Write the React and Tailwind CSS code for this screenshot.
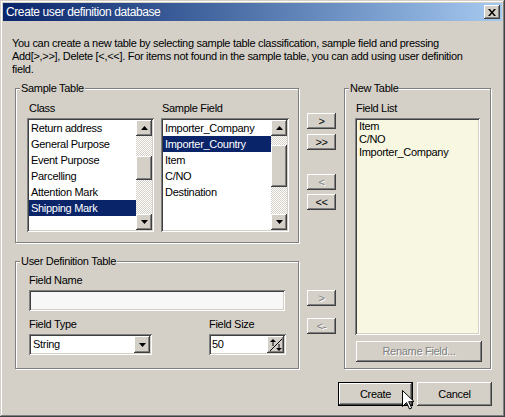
import React from "react";

// Win2000 style bevels
const raised =
  "shadow-[inset_-1px_-1px_0_#404040,inset_1px_1px_0_#ffffff,inset_-2px_-2px_0_#808080,inset_2px_2px_0_#d4d0c8]";
const sunken =
  "shadow-[inset_1px_1px_0_#808080,inset_-1px_-1px_0_#ffffff,inset_2px_2px_0_#404040,inset_-2px_-2px_0_#d4d0c8]";
const disabledText = "text-[#808080] [text-shadow:1px_1px_0_#ffffff]";

function Group({ label, className, children }) {
  return (
    <div
      className={`relative border border-[#808080] shadow-[inset_1px_1px_0_#ffffff,1px_1px_0_#ffffff] ${className}`}
    >
      <span className="absolute left-[4px] top-[-7px] px-[1px] bg-[#d4d0c8] leading-[13px]">
        {label}
      </span>
      {children}
    </div>
  );
}

function Arrow({ up }) {
  return (
    <svg width="7" height="4" viewBox="0 0 7 4">
      {up ? (
        <polygon points="3.5,0 7,4 0,4" fill="#000" />
      ) : (
        <polygon points="0,0 7,0 3.5,4" fill="#000" />
      )}
    </svg>
  );
}

function Scrollbar({ thumbTop, thumbHeight }) {
  return (
    <div className="w-[16px] flex flex-col">
      <div className={`h-[16px] bg-[#d4d0c8] flex items-center justify-center ${raised}`}>
        <Arrow up />
      </div>
      <div className="flex-1 flex flex-col bg-[repeating-conic-gradient(#d4d0c8_0%_25%,#ffffff_0%_50%)] bg-[length:2px_2px]">
        <div style={{ height: thumbTop }} />
        <div className={`bg-[#d4d0c8] ${raised}`} style={{ height: thumbHeight }} />
      </div>
      <div className={`h-[16px] bg-[#d4d0c8] flex items-center justify-center ${raised}`}>
        <Arrow />
      </div>
    </div>
  );
}

function ListBox({ items, selected, thumbTop, thumbHeight, width }) {
  return (
    <div className={`mt-[3px] h-[114px] bg-white p-[2px] flex ${sunken}`} style={{ width }}>
      <div className="flex-1">
        {items.map((item, i) => (
          <div
            key={i}
            className={`h-[16px] leading-[16px] pl-[2px] whitespace-nowrap ${
              i === selected ? "bg-[#0a246a] text-white" : ""
            }`}
          >
            {item}
          </div>
        ))}
      </div>
      <Scrollbar thumbTop={thumbTop} thumbHeight={thumbHeight} />
    </div>
  );
}

function SmallButton({ label, disabled, className }) {
  return (
    <div
      className={`h-[16px] w-[29px] bg-[#d4d0c8] flex items-center justify-center leading-none ${raised} ${
        disabled ? disabledText : ""
      } ${className}`}
    >
      {label}
    </div>
  );
}

function SpinGlyph() {
  return (
    <svg width="12" height="12" viewBox="0 0 12 12">
      <line x1="0" y1="12" x2="12" y2="0" stroke="#000" strokeWidth="1" />
      <polygon points="3,0 6,3 0,3" fill="#000" />
      <rect x="2.5" y="3" width="1" height="4" fill="#000" />
      <polygon points="9,12 12,9 6,9" fill="#000" />
      <rect x="8.5" y="5" width="1" height="4" fill="#000" />
    </svg>
  );
}

export default function App() {
  return (
    <div className="relative w-[505px] h-[417px] overflow-hidden bg-[#d4d0c8] p-[3px] flex flex-col text-black text-[11px] tracking-[-0.3px] font-['Liberation_Sans',Arial,sans-serif] shadow-[inset_-1px_-1px_0_#404040,inset_1px_1px_0_#d4d0c8,inset_-2px_-2px_0_#808080,inset_2px_2px_0_#ffffff]">
      {/* title bar */}
      <div className="h-[18px] flex items-center pl-[3px] pr-[2px] bg-linear-to-r from-[#0a246a] to-[#a6caf0]">
        <span className="text-white text-[12px] tracking-[-0.4px] leading-none">
          Create user definition database
        </span>
        <div className={`ml-auto w-[16px] h-[14px] bg-[#d4d0c8] flex items-center justify-center ${raised}`}>
          <svg width="8" height="7" viewBox="0 0 8 7">
            <path d="M0 0h2l2 2.5L6 0h2L5 3.5 8 7H6L4 4.5 2 7H0l3-3.5z" fill="#000" />
          </svg>
        </div>
      </div>

      <div className="flex-1 px-[9px]">
        <p className="mt-[16px] leading-[13px] whitespace-nowrap">
          You can create a new table by selecting sample table classification, sample field and pressing
          <br />
          Add[&gt;,&gt;&gt;], Delete [&lt;,&lt;&lt;]. For items not found in the sample table, you can add using user definition
          <br />
          field.
        </p>

        <div className="mt-[12px] ml-[3px] flex">
          {/* left column */}
          <div className="flex flex-col">
            <Group label="Sample Table" className="w-[284px] h-[155px] pt-[13px] pl-[11px]">
              <div className="flex gap-[7px]">
                <div>
                  <div className="ml-[2px] leading-[13px]">Class</div>
                  <ListBox
                    width={127}
                    items={[
                      "Return address",
                      "General Purpose",
                      "Event Purpose",
                      "Parcelling",
                      "Attention Mark",
                      "Shipping Mark",
                    ]}
                    selected={5}
                    thumbTop={20}
                    thumbHeight={24}
                  />
                </div>
                <div>
                  <div className="ml-[1px] leading-[13px]">Sample Field</div>
                  <ListBox
                    width={128}
                    items={["Importer_Company", "Importer_Country", "Item", "C/NO", "Destination"]}
                    selected={1}
                    thumbTop={9}
                    thumbHeight={42}
                  />
                </div>
              </div>
            </Group>

            <Group label="User Definition Table" className="mt-[18px] w-[284px] h-[108px] pt-[12px] pl-[13px]">
              <div className="leading-[13px]">Field Name</div>
              <div className={`mt-[3px] w-[256px] h-[21px] bg-[#f7f7f7] ${sunken}`} />
              <div className="mt-[7px] flex">
                <div className="w-[123px]">
                  <div className="leading-[13px]">Field Type</div>
                  <div className={`mt-[3px] h-[21px] bg-white p-[2px] flex items-center ${sunken}`}>
                    <span className="flex-1 pl-[2px]">String</span>
                    <div className={`w-[16px] h-[17px] bg-[#d4d0c8] flex items-center justify-center ${raised}`}>
                      <Arrow />
                    </div>
                  </div>
                </div>
                <div className="ml-[57px] w-[77px]">
                  <div className="leading-[13px]">Field Size</div>
                  <div className={`mt-[3px] h-[21px] bg-white p-[2px] flex items-center ${sunken}`}>
                    <span className="flex-1 pl-[1px]">50</span>
                    <div className={`w-[17px] h-[17px] bg-[#d4d0c8] flex items-center justify-center ${raised}`}>
                      <SpinGlyph />
                    </div>
                  </div>
                </div>
              </div>
            </Group>
          </div>

          {/* middle buttons */}
          <div className="ml-[8px] flex flex-col">
            <SmallButton label=">" className="mt-[25px]" />
            <SmallButton label=">>" className="mt-[5px]" />
            <SmallButton label="<" disabled className="mt-[24px]" />
            <SmallButton label="<<" className="mt-[4px]" />
            <SmallButton label=">" disabled className="mt-[80px]" />
            <SmallButton label="<-" disabled className="mt-[12px]" />
          </div>

          {/* right column */}
          <Group label="New Table" className="ml-[8px] w-[147px] h-[281px] pt-[13px] pl-[10px]">
            <div className="ml-[1px] leading-[13px]">Field List</div>
            <div className={`mt-[3px] w-[125px] h-[217px] bg-[#f7f7e2] p-[2px] ${sunken}`}>
              {["Item", "C/NO", "Importer_Company"].map((f) => (
                <div key={f} className="h-[13px] leading-[13px] pl-[2px]">
                  {f}
                </div>
              ))}
            </div>
            <div
              className={`mt-[6px] ml-[1px] w-[126px] h-[21px] bg-[#d4d0c8] flex items-center justify-center ${raised} ${disabledText}`}
            >
              Rename Field...
            </div>
          </Group>
        </div>

        {/* dialog buttons */}
        <div className="mt-[13px] mr-[1px] flex justify-end gap-[4px]">
          <div className="w-[75px] h-[24px] border border-black">
            <div className={`w-full h-full bg-[#d4d0c8] flex items-center justify-center ${raised}`}>
              Create
            </div>
          </div>
          <div className={`w-[75px] h-[24px] bg-[#d4d0c8] flex items-center justify-center ${raised}`}>
            Cancel
          </div>
        </div>
      </div>

      {/* mouse pointer */}
      <svg className="absolute left-[402px] top-[390px]" width="12" height="20" viewBox="0 0 12 20">
        <path d="M0.5 0.5v16l4-4 3 6.5 2.2-1-3-6.3h5.5z" fill="#fff" stroke="#000" strokeWidth="1" />
      </svg>
    </div>
  );
}
